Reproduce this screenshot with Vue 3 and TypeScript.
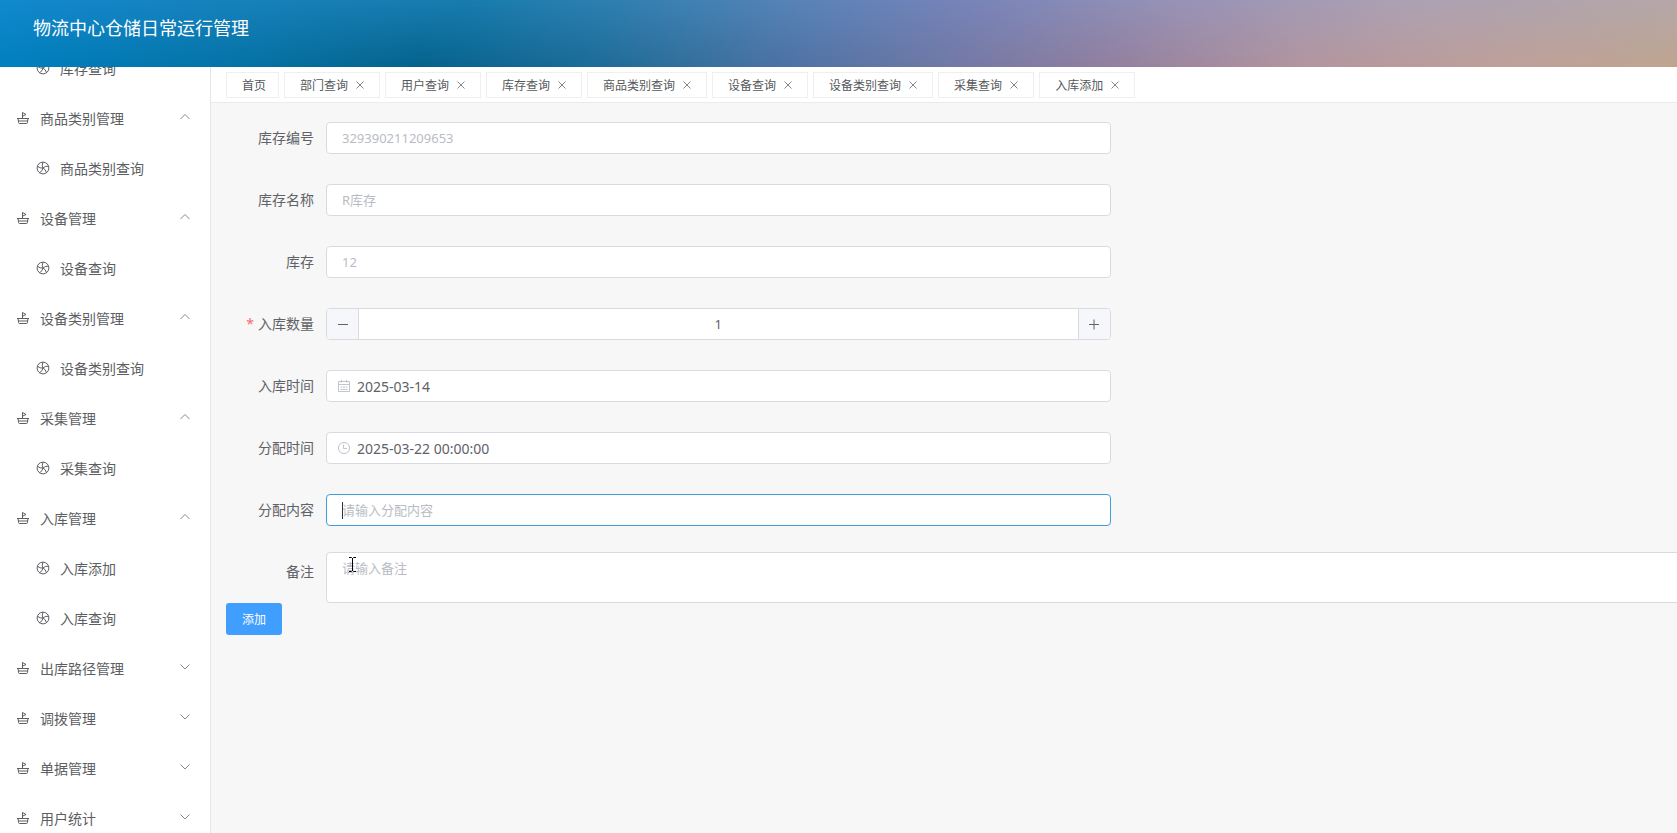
<script setup lang="ts">
import { nextTick, onMounted, ref } from 'vue'

interface MenuEntry {
  label: string
  kind: 'group' | 'leaf'
  open?: boolean
}

const menu: MenuEntry[] = [
  { label: '库存查询', kind: 'leaf' },
  { label: '商品类别管理', kind: 'group', open: true },
  { label: '商品类别查询', kind: 'leaf' },
  { label: '设备管理', kind: 'group', open: true },
  { label: '设备查询', kind: 'leaf' },
  { label: '设备类别管理', kind: 'group', open: true },
  { label: '设备类别查询', kind: 'leaf' },
  { label: '采集管理', kind: 'group', open: true },
  { label: '采集查询', kind: 'leaf' },
  { label: '入库管理', kind: 'group', open: true },
  { label: '入库添加', kind: 'leaf' },
  { label: '入库查询', kind: 'leaf' },
  { label: '出库路径管理', kind: 'group', open: false },
  { label: '调拨管理', kind: 'group', open: false },
  { label: '单据管理', kind: 'group', open: false },
  { label: '用户统计', kind: 'group', open: false },
]

const tabs = ['部门查询', '用户查询', '库存查询', '商品类别查询', '设备查询', '设备类别查询', '采集查询', '入库添加']

const quantity = ref(1)
const inDate = ref('2025-03-14')
const assignTime = ref('2025-03-22 00:00:00')
const assignContent = ref('')
const remark = ref('')

const sidebar = ref<HTMLElement | null>(null)
const contentInput = ref<HTMLInputElement | null>(null)

onMounted(async () => {
  await nextTick()
  if (sidebar.value) sidebar.value.scrollTop = 24
  contentInput.value?.focus()
})
</script>

<template>
  <div class="app">
    <header class="header">
      <h1>物流中心仓储日常运行管理</h1>
    </header>
    <div class="body">
      <nav ref="sidebar" class="sidebar">
        <template v-for="(item, i) in menu" :key="i">
          <button v-if="item.kind === 'group'" type="button" class="item group" :aria-expanded="item.open">
            <svg class="icon" viewBox="0 0 14 14">
              <path d="M1 7.500h12M2 7.500l.6 4.200q.1.800.9.800h7q.8 0 .9-.800l.6-4.200M2.300 10h9.400M6.500 7.500V1.500L10 3.500L6.500 5.200" />
            </svg>
            <span>{{ item.label }}</span>
            <svg class="arrow" viewBox="0 0 12 12">
              <path :d="item.open ? 'M1.500 8L6 3.500L10.500 8' : 'M1.500 3.500L6 8L10.500 3.500'" />
            </svg>
          </button>
          <a v-else href="#" class="item leaf">
            <svg class="icon" viewBox="0 0 14 14">
              <circle cx="7" cy="7" r="5.900" />
              <path d="M7 7Q5.500 4.500 7 1.100M7 7Q4.200 7.600 1.400 5.200M7 7Q6.700 9.900 3.500 11.800M7 7Q9.700 8.300 10.500 11.800M7 7Q9 4.900 12.600 5.200" />
            </svg>
            <span>{{ item.label }}</span>
          </a>
        </template>
      </nav>
      <main class="main">
        <div class="tabs">
          <button type="button" class="tab">首页</button>
          <button v-for="tab in tabs" :key="tab" type="button" class="tab">
            <span>{{ tab }}</span>
            <svg viewBox="0 0 14 14"><path d="M3.500 3.500l7 7M10.500 3.500l-7 7" /></svg>
          </button>
        </div>
        <form class="form" @submit.prevent>
          <div class="row">
            <label for="code">库存编号</label>
            <input id="code" class="box" type="text" placeholder="329390211209653" />
          </div>
          <div class="row">
            <label for="name">库存名称</label>
            <input id="name" class="box" type="text" placeholder="R库存" />
          </div>
          <div class="row">
            <label for="stock">库存</label>
            <input id="stock" class="box" type="text" placeholder="12" />
          </div>
          <div class="row">
            <label for="quantity"><span class="star">*</span>入库数量</label>
            <div class="box stepper">
              <button type="button" aria-label="减少" @click="quantity--">
                <svg viewBox="0 0 12 12"><path d="M1 6.500h10" /></svg>
              </button>
              <input id="quantity" v-model="quantity" type="text" />
              <button type="button" aria-label="增加" @click="quantity++">
                <svg viewBox="0 0 12 12"><path d="M1 6.500h10M6 1.500v10" /></svg>
              </button>
            </div>
          </div>
          <div class="row">
            <label for="in-date">入库时间</label>
            <div class="box dated">
              <svg viewBox="0 0 14 14">
                <path d="M1.500 2.500h11v10h-11zM1.500 5.500h11M4.500 1v2.500M9.500 1v2.500M3.500 8h2M6 8h2M8.500 8h2M3.500 10.500h2M6 10.500h2M8.500 10.500h2" />
              </svg>
              <input id="in-date" v-model="inDate" type="text" />
            </div>
          </div>
          <div class="row">
            <label for="assign-time">分配时间</label>
            <div class="box dated">
              <svg viewBox="0 0 14 14">
                <circle cx="7" cy="7" r="5.600" />
                <path d="M6.500 3.500v4h3.500" />
              </svg>
              <input id="assign-time" v-model="assignTime" type="text" />
            </div>
          </div>
          <div class="row">
            <label for="content">分配内容</label>
            <div class="field">
              <input id="content" ref="contentInput" v-model="assignContent" class="box" type="text" placeholder="请输入分配内容" />
              <span v-if="!assignContent" class="caret"></span>
            </div>
          </div>
          <div class="row wide">
            <label for="remark">备注</label>
            <div class="field">
              <textarea id="remark" v-model="remark" placeholder="请输入备注"></textarea>
              <svg class="pointer" viewBox="0 0 9 17">
                <path d="M1 1.500h2.500l1 1 1-1H8M4.500 2v13M1 15.500h2.500l1-1 1 1H8" />
              </svg>
            </div>
          </div>
          <button type="submit" class="submit">添加</button>
        </form>
      </main>
    </div>
  </div>
</template>

<style>
body {
  margin: 0;
  overflow: hidden;
}
</style>

<style scoped>
.app {
  display: flex;
  flex-direction: column;
  height: 100vh;
  color: #606266;
  background: #f7f7f7;
  font-family: "Noto Sans", "Noto Sans CJK SC", sans-serif;
  font-size: 14px;
}
.app * {
  box-sizing: border-box;
}
button,
input,
textarea {
  font-family: inherit;
  color: inherit;
}
svg {
  fill: none;
  stroke: currentColor;
  flex: none;
}
.header {
  position: relative;
  flex: none;
  height: 67px;
  padding: 0 33px;
  background: linear-gradient(90deg, #0080bf 0%, #0573a6 14%, #05638c 25%, #1f6c98 36%, #5173a4 48%, #7379a6 57%, #927f9f 66%, #b4969f 78%, #bfa19a 90%, #bfa590 100%);
}
.header::before {
  content: "";
  position: absolute;
  inset: 0;
  background: linear-gradient(90deg, #1288ce 0%, #187fb6 18%, #187caf 28%, #3080b0 37%, #5a83b8 48%, #7583b8 57%, #9792b6 70%, #aba0b3 83%, #b4a7a8 100%);
  mask-image: linear-gradient(#000, transparent);
}
.header h1 {
  position: relative;
  margin: 0;
  color: #fff;
  font-size: 18px;
  font-weight: 400;
  line-height: 56px;
}
.body {
  flex: 1;
  display: flex;
  min-height: 0;
}
.sidebar {
  flex: none;
  width: 211px;
  overflow-y: auto;
  scrollbar-width: none;
  background: #fff;
  border-right: 1px solid #e6e6e6;
}
.item {
  display: flex;
  align-items: center;
  gap: 10px;
  width: 100%;
  height: 50px;
  border: 0;
  background: none;
  font-size: 14px;
  text-decoration: none;
  color: #5c5e62;
}
.group {
  padding: 0 19px 0 16px;
}
.leaf {
  padding: 0 20px 0 36px;
}
.icon {
  width: 14px;
  height: 14px;
}
.arrow {
  width: 12px;
  height: 12px;
  margin-left: auto;
  margin-bottom: 2px;
  color: #85878b;
}
.main {
  flex: 1;
  min-width: 0;
  overflow: hidden;
}
.tabs {
  display: flex;
  gap: 5px;
  height: 36px;
  padding: 5px 15px;
  background: #fff;
  border-bottom: 1px solid #ebebeb;
}
.tab {
  display: flex;
  align-items: center;
  gap: 5px;
  height: 26px;
  padding: 0 12px 0 15px;
  border: 1px solid #efefef;
  background: #fff;
  color: #56585c;
  font-size: 12px;
  white-space: nowrap;
}
.tab svg {
  width: 14px;
  height: 14px;
  color: #85878b;
}
.form {
  padding: 19px 15px;
}
.row {
  display: flex;
  width: 61.6%;
  margin-bottom: 30px;
}
.row label {
  flex: none;
  width: 100px;
  padding-right: 12px;
  line-height: 32px;
  text-align: right;
}
.star {
  margin-right: 4px;
  color: #f56c6c;
}
.box {
  flex: 1;
  min-width: 0;
  height: 32px;
  padding: 0 15px;
  border: 1px solid #d9dbe0;
  border-radius: 4px;
  background: #fff;
  font-size: 13px;
  outline: none;
}
.box:focus {
  border-color: #409eda;
}
::placeholder {
  color: #b9bcc4;
  opacity: 1;
}
.stepper {
  display: flex;
  padding: 0;
  overflow: hidden;
}
.stepper input {
  flex: 1;
  min-width: 0;
  border: 0;
  padding: 0;
  font-size: 13px;
  text-align: center;
  outline: none;
}
.stepper button {
  display: flex;
  align-items: center;
  justify-content: center;
  width: 32px;
  padding: 0;
  border: 0;
  background: #f5f7fa;
}
.stepper button:first-child {
  border-right: 1px solid #d9dbe0;
}
.stepper button:last-child {
  border-left: 1px solid #d9dbe0;
}
.stepper svg {
  width: 12px;
  height: 12px;
}
.dated {
  display: flex;
  align-items: center;
  gap: 6px;
  padding: 0 10px;
}
.dated svg {
  width: 14px;
  height: 14px;
  color: #c0c4cc;
}
.dated input {
  flex: 1;
  min-width: 0;
  padding: 0;
  border: 0;
  font-size: 14px;
  outline: none;
}
.wide {
  width: calc(100% + 60px);
  margin: -4px 0 0;
}
.wide label {
  padding-top: 4px;
}
.field {
  position: relative;
  flex: 1;
  display: flex;
  min-width: 0;
}
.field input {
  caret-color: transparent;
}
.caret {
  position: absolute;
  left: 16px;
  top: 8px;
  width: 1px;
  height: 17px;
  background: #303133;
}
.field textarea {
  flex: 1;
  height: 51px;
  padding: 5px 15px;
  border: 1px solid #d9dbe0;
  border-radius: 4px;
  background: #fff;
  font-size: 13px;
  line-height: 20px;
  resize: none;
  outline: none;
}
.pointer {
  position: absolute;
  left: 22px;
  top: 4px;
  width: 9px;
  height: 17px;
  color: #000;
}
.submit {
  display: block;
  height: 32px;
  padding: 0 16px;
  border: 0;
  border-radius: 3px;
  background: #409eff;
  color: #fff;
  font-size: 12px;
}
</style>
